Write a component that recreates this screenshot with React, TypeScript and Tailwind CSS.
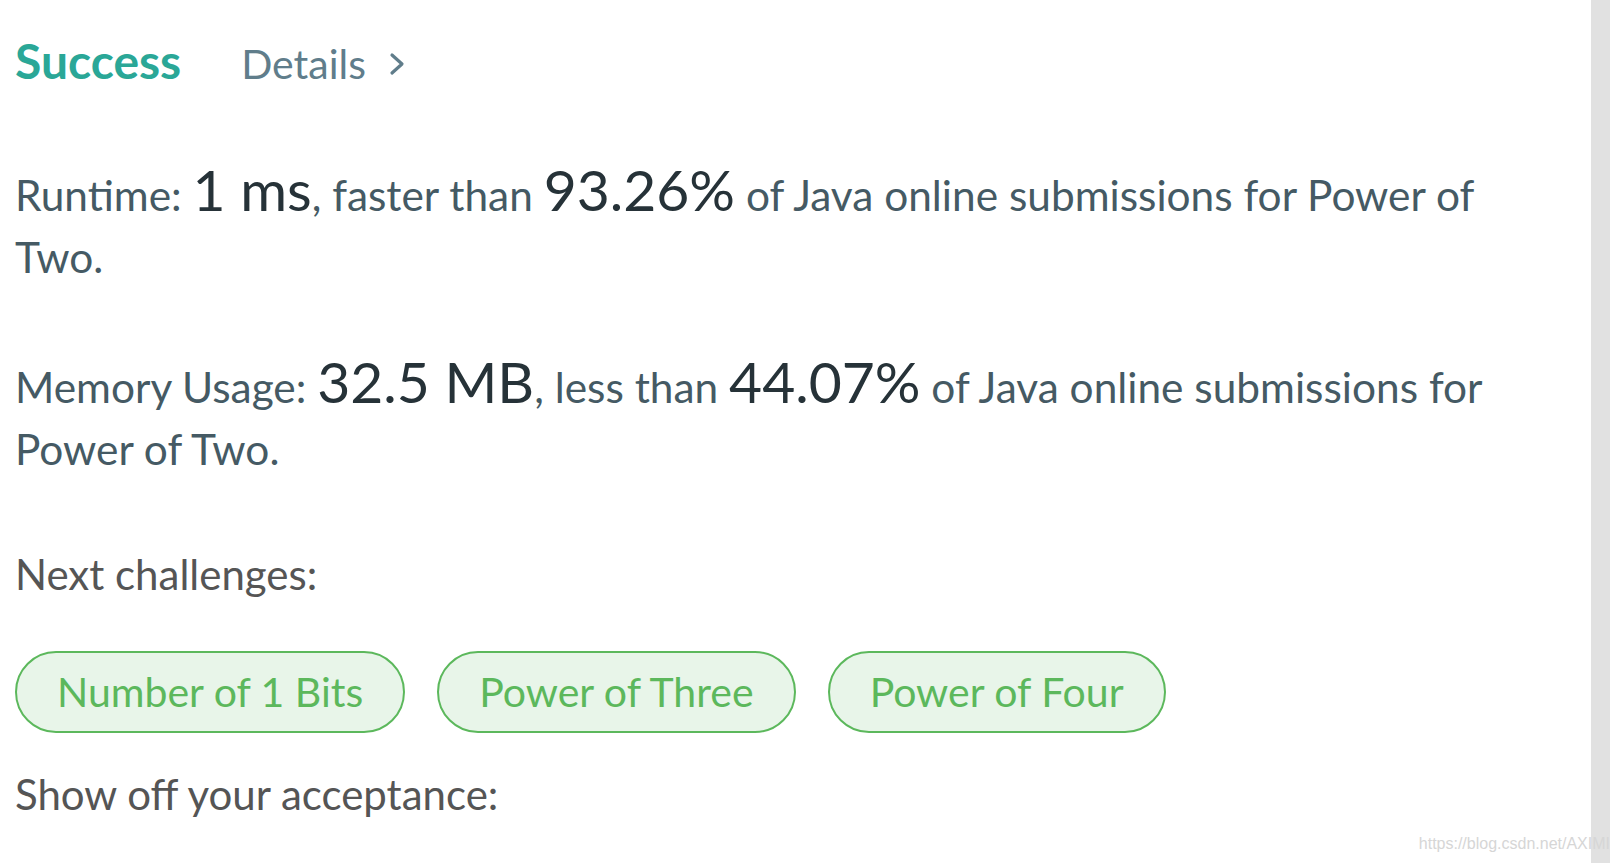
import React from 'react';

const challenges = ['Number of 1 Bits', 'Power of Three', 'Power of Four'];

function Chevron() {
  return (
    <svg width="18" height="26" viewBox="0 0 18 26">
      <polyline points="4,4 14,13 4,22" fill="none" stroke="#607d8b" strokeWidth="3.2" strokeLinecap="round" strokeLinejoin="round" />
    </svg>
  );
}

function Stat({ label, value, mid, pct, rest }: { label: string; value: string; mid: string; pct: string; rest: string }) {
  return (
    <p className="text-[42.4px] leading-[62px] text-[#455a64]">
      {label}{' '}
      <span className="text-[57px] leading-[62px] text-[#263238]">{value}</span>
      {mid}
      <span className="text-[57px] leading-[62px] text-[#263238]">{pct}</span>
      {rest}
    </p>
  );
}

export default function App() {
  return (
    <div className="relative flex h-[863px] w-full overflow-hidden bg-white" style={{ fontFamily: 'Lato, "Open Sans", sans-serif' }}>
      <main className="flex flex-1 flex-col pl-[15px] pr-[40px] pt-[31px]">
        <div className="flex items-baseline gap-[60px] leading-[60px]">
          <span className="text-[48px] font-bold text-[#2aa797]">Success</span>
          <a className="flex items-center gap-[22px] text-[41px] text-[#607d8b]">
            Details
            <Chevron />
          </a>
        </div>

        <div className="mt-[64px]">
          <Stat label="Runtime:" value="1 ms" mid=", faster than " pct="93.26%" rest=" of Java online submissions for Power of Two." />
        </div>
        <div className="mt-[62px]">
          <Stat label="Memory Usage:" value="32.5 MB" mid=", less than " pct="44.07%" rest=" of Java online submissions for Power of Two." />
        </div>

        <p className="mt-[63px] text-[42px] leading-[62px] text-[#555555]">Next challenges:</p>

        <div className="mt-[46px] flex gap-[32px]">
          {challenges.map((c) => (
            <a
              key={c}
              className="h-[82px] rounded-full border-2 border-[#5cb85c] bg-[#e8f5e9] px-[40px] text-[41px] leading-[78px] text-[#5cb85c]"
            >
              {c}
            </a>
          ))}
        </div>

        <p className="mt-[30px] text-[42px] leading-[62px] text-[#555555]">Show off your acceptance:</p>
      </main>
      <div className="h-full w-[19px] shrink-0 bg-[#e1e1e1]" />
      <span
        className="absolute bottom-[7px] right-0 text-[16px] text-[#d6d6d6]"
        style={{ fontFamily: '"Liberation Sans", Arial, sans-serif' }}
      >
        https://blog.csdn.net/AXIMI
      </span>
    </div>
  );
}
